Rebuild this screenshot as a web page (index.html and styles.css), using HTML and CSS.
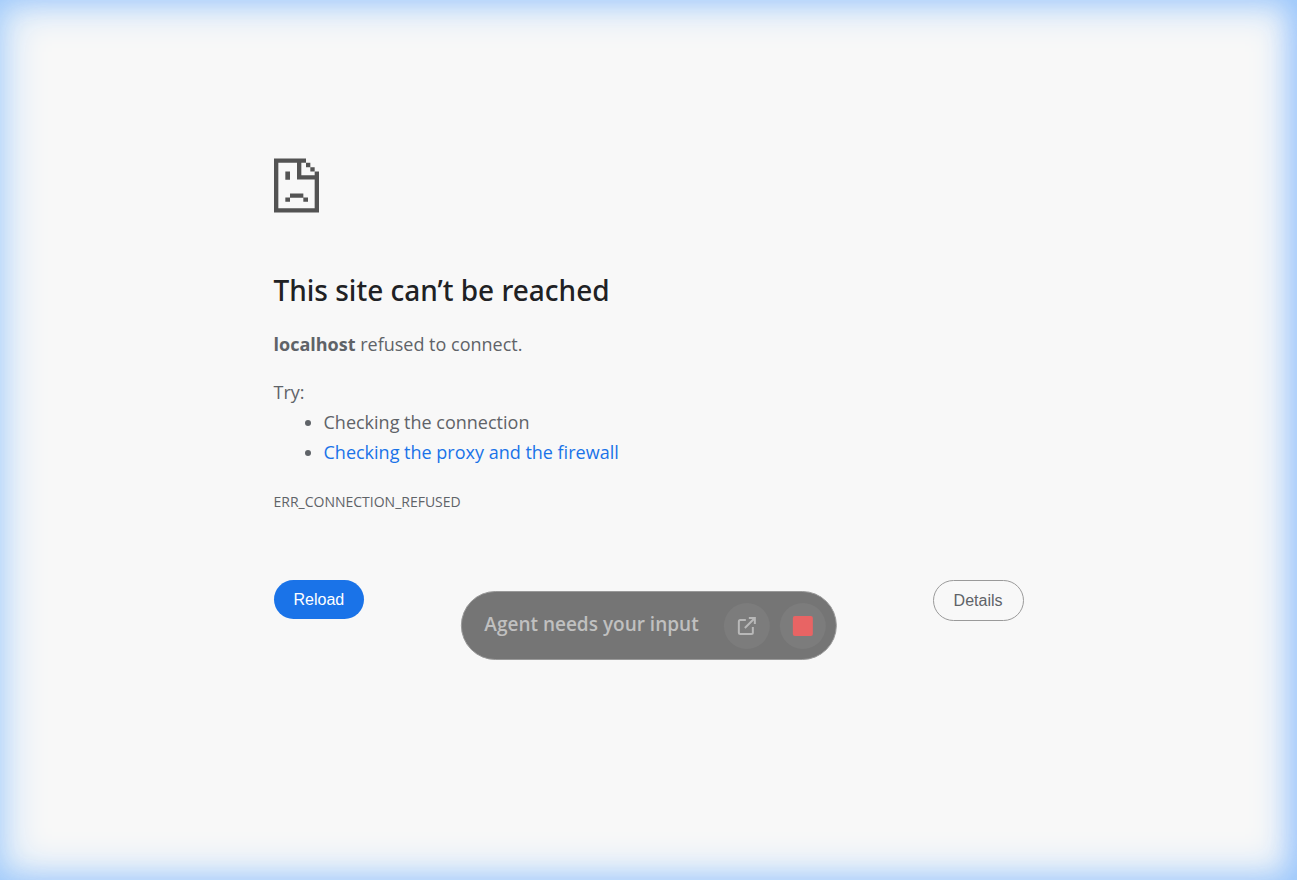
FILE: index.html
```html
<!DOCTYPE html>
<html lang="en">
<head>
  <meta charset="UTF-8">
  <meta name="viewport" content="width=device-width, initial-scale=1.0">
  <title>localhost</title>
  <link rel="stylesheet" href="styles.css">
</head>
<body>
  <main class="error-page">
    <svg class="error-icon" viewBox="0 0 135 162" aria-hidden="true">
      <path d="M0 0H96V13H82V50H122V39H135V162H0ZM13 13V149H122V63H69V13Z" fill-rule="evenodd"/>
      <path d="M96 13h13v13H96zM109 26h13v13h-13zM34 39h14v25H34zM48 105h40v13H48zM34 117h14v13H34zM88 117h14v13H88z"/>
    </svg>

    <h1>This site can’t be reached</h1>
    <p class="summary"><strong>localhost</strong> refused to connect.</p>

    <div class="suggestions">
      <p>Try:</p>
      <ul>
        <li>Checking the connection</li>
        <li><a href="#buttons">Checking the proxy and the firewall</a></li>
      </ul>
    </div>

    <div class="error-code">ERR_CONNECTION_REFUSED</div>

    <div id="buttons" class="buttons">
      <button type="button" class="btn btn-reload">Reload</button>
      <button type="button" class="btn btn-details">Details</button>
    </div>
  </main>

  <div class="glow"></div>

  <div class="agent-bar">
    <span class="agent-text">Agent needs your input</span>
    <div class="agent-actions">
      <button type="button" class="agent-btn" aria-label="Open">
        <svg class="open-icon" viewBox="0 0 20 20" aria-hidden="true">
          <path d="M9 4H3.500Q2 4 2 5.500V16.500Q2 18 3.500 18H14.500Q16 18 16 16.500V11M12 2H18V8M18 2L8 12"/>
        </svg>
      </button>
      <button type="button" class="agent-btn" aria-label="Stop"><span class="stop-icon"></span></button>
    </div>
  </div>
</body>
</html>
```

FILE: styles.css
```css
* { box-sizing: border-box; }
body {
  margin: 0;
  min-height: 100vh;
  background: #f8f8f8;
  color: #5f6368;
  font-family: "Segoe UI", "Open Sans", sans-serif;
  font-size: 18px;
  line-height: 30px;
}
p, ul { margin: 0; }

.error-page { max-width: 750px; margin: 0 auto; padding-top: 158px; }
.error-icon { display: block; width: 45px; height: 55px; fill: #535353; }
h1 { margin: 57px 0 19px; color: #202124; font-family: "Segoe UI", "Noto Sans", sans-serif; font-size: 28px; font-weight: 500; line-height: 40px; }
.summary { margin-bottom: 18px; }
.suggestions ul { padding-left: 50px; }
.suggestions a { color: #1a73e8; text-decoration: none; }
.error-code { margin-top: 24px; font-size: 14px; line-height: 22px; }

/* buttons */
.buttons { display: flex; justify-content: space-between; align-items: flex-start; margin-top: 67px; }
.btn { border: none; border-radius: 24px; padding: 10px 20px; font-family: "Liberation Sans", Arial, sans-serif; font-size: 16px; line-height: 19px; cursor: pointer; }
.btn-reload { background: #1a73e8; color: #fff; }
.btn-details { border: 1px solid #9a9a9a; background: transparent; color: #5f6368; }

/* agent overlay */
.glow {
  position: fixed;
  inset: 0;
  pointer-events: none;
  box-shadow: inset 0 0 44px #9ccafa, inset -8px 0 32px -8px #8fb6ff;
}
.agent-bar {
  position: fixed;
  bottom: 220px;
  left: 50%;
  transform: translateX(-50%);
  display: flex;
  align-items: center;
  gap: 25px;
  padding: 11px 10px 10px 23px;
  border: 1px solid #999;
  border-radius: 35px;
  background: #757575;
  white-space: nowrap;
}
.agent-text { padding-bottom: 4px; color: #c0c0c0; font-size: 19px; font-weight: 600; }
.agent-actions { display: flex; gap: 10px; }
.agent-btn { display: flex; align-items: center; justify-content: center; width: 46px; height: 46px; padding: 0; border: none; border-radius: 50%; background: #7c7c7c; cursor: pointer; }
.open-icon { width: 20px; height: 20px; fill: none; stroke: #b8b8b8; stroke-width: 2; }
.stop-icon { width: 20px; height: 20px; border-radius: 2px; background: #e86464; }
```
